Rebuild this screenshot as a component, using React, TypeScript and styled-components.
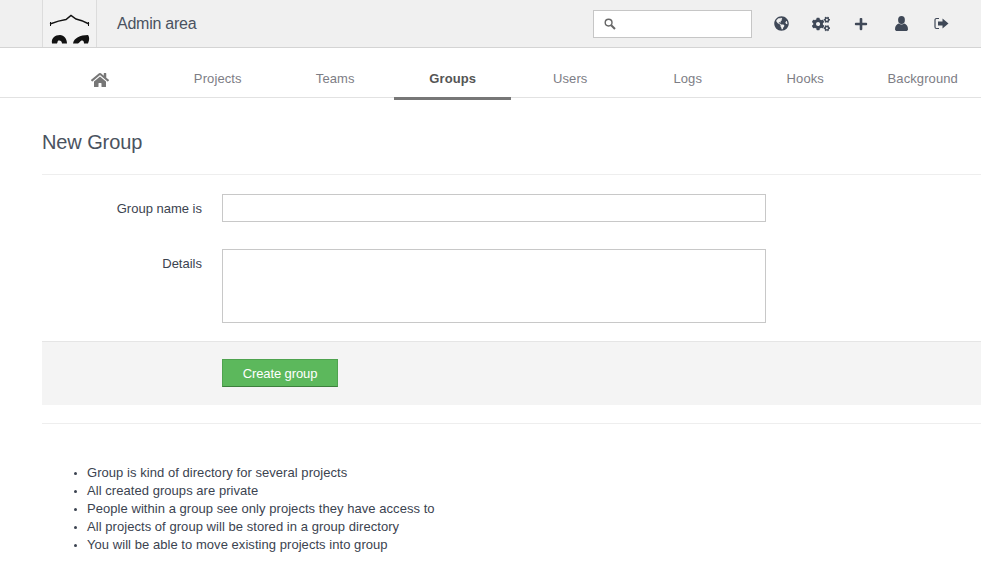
import styled, { createGlobalStyle } from "styled-components";
import { FaCogs, FaGlobeAmericas, FaHome, FaPlus } from "react-icons/fa";

const GlobalStyle = createGlobalStyle`
  html, body {
    margin: 0;
    padding: 0;
    background: #fff;
    overflow: hidden;
  }
  body {
    font-family: "Liberation Sans", Arial, sans-serif;
    font-size: 13px;
    color: #333c48;
  }
`;

const Page = styled.div`
  width: 981px;
  height: 565px;
  overflow: hidden;
`;

const Header = styled.header`
  height: 47px;
  background: #f0f0f0;
  border-bottom: 1px solid #d4d4d4;
  display: flex;
  align-items: center;
  padding-left: 42px;
`;

const LogoBox = styled.div`
  width: 53px;
  height: 47px;
  border-left: 1px solid #dcdcdc;
  border-right: 1px solid #dcdcdc;
  background: #f2f2f2;
  overflow: hidden;
`;

const Title = styled.h1`
  margin: 0 0 0 20px;
  font-size: 16px;
  font-weight: 400;
  letter-spacing: -0.25px;
  color: #4a5260;
  flex: 1;
`;

const SearchBox = styled.div`
  width: 147px;
  height: 26px;
  background: #fff;
  border: 1px solid #c6c6c6;
  display: flex;
  align-items: center;
  padding-left: 10px;
  margin-right: 9px;
  color: #666;
`;

const IconLink = styled.a<{ $size?: number }>`
  width: 40px;
  display: flex;
  justify-content: center;
  align-items: center;
  color: #3f4857;
  font-size: ${({ $size }) => $size ?? 15}px;
`;

const IconRow = styled.div`
  display: flex;
  padding-right: 20px;
`;

const Nav = styled.nav`
  height: 49px;
  border-bottom: 1px solid #e2e2e2;
  display: flex;
  padding-left: 41px;
`;

const Tab = styled.a<{ $active?: boolean }>`
  width: 118px;
  height: 52px;
  box-sizing: border-box;
  display: flex;
  justify-content: center;
  align-items: center;
  padding: 11px 0 0 1px;
  font-size: 13px;
  letter-spacing: 0.1px;
  font-weight: ${({ $active }) => ($active ? 700 : 400)};
  color: ${({ $active }) => ($active ? "#555" : "#7d7d85")};
  border-bottom: 3px solid ${({ $active }) => ($active ? "#777" : "transparent")};
`;

const HomeIcon = styled(FaHome)`
  font-size: 18px;
  margin-top: 4px;
  color: #777;
`;

const Main = styled.main`
  padding-left: 42px;
`;

const PageTitle = styled.h3`
  margin: 0;
  padding: 32px 0 20px;
  height: 77px;
  box-sizing: border-box;
  line-height: 24px;
  font-size: 20px;
  font-weight: 400;
  letter-spacing: -0.1px;
  color: #4a5260;
  border-bottom: 1px solid #eee;
`;

const Field = styled.div`
  display: flex;
  align-items: flex-start;
  margin-top: 19px;
  & + & {
    margin-top: 27px;
  }
`;

const Label = styled.label`
  width: 160px;
  height: 28px;
  text-align: right;
  line-height: 29px;
  color: #3b4350;
`;

const TextInput = styled.input`
  width: 544px;
  height: 28px;
  box-sizing: border-box;
  margin-left: 20px;
  padding: 4px 8px;
  background: #fff;
  border: 1px solid #c8c8c8;
  border-radius: 0;
`;

const TextArea = styled.textarea`
  display: block;
  width: 544px;
  height: 74px;
  box-sizing: border-box;
  margin-left: 20px;
  padding: 4px 8px;
  background: #fff;
  border: 1px solid #c8c8c8;
  border-radius: 0;
  resize: none;
`;

const Actions = styled.div`
  margin-top: 18px;
  height: 64px;
  box-sizing: border-box;
  background: #f4f4f4;
  border-top: 1px solid #e5e5e5;
  padding: 17px 0 0 180px;
`;

const SubmitButton = styled.button`
  width: 116px;
  height: 28px;
  box-sizing: border-box;
  padding: 0;
  font-family: inherit;
  font-size: 13px;
  letter-spacing: -0.1px;
  color: #fff;
  background: #5cb85c;
  border: 1px solid #4fa34f;
  border-bottom-color: #3c7f3c;
`;

const Divider = styled.hr`
  margin: 18px 0 0;
  border: 0;
  border-top: 1px solid #eee;
`;

const Notes = styled.ul`
  margin: 40px 0 0;
  padding: 0 0 0 45px;
  line-height: 18px;
  font-size: 13px;
  letter-spacing: 0.05px;
  color: #3b4350;
  li::marker {
    font-size: 10px;
  }
`;

const tabs = ["Projects", "Teams", "Groups", "Users", "Logs", "Hooks", "Background"];

const notes = [
  "Group is kind of directory for several projects",
  "All created groups are private",
  "People within a group see only projects they have access to",
  "All projects of group will be stored in a group directory",
  "You will be able to move existing projects into group",
];

function Logo() {
  return (
    <svg width="53" height="47" viewBox="0 0 53 47">
      <path d="M7 24Q16 20.500 23 19.500L28 15.500L33 19Q40 20.500 46 24" fill="none" stroke="#111" strokeWidth="1.500" />
      <path d="M7.500 22v4M45.500 22v4" stroke="#111" strokeWidth="1" />
      <path d="M9 43.500C8 38 12 35 17 35C21 35 24 39 24 43.500H19C19 41 17 40 15.500 40.500C14 41 15 43.500 13.500 43.500z" fill="#111" />
      <path d="M30 43.500C31 38 37 35 45 35C47 38 46 41 45 43.500H41C41 41 40 40 38.500 40.500C37 41 36 43.500 35 43.500z" fill="#111" />
    </svg>
  );
}

function SearchGlyph() {
  return (
    <svg width="12" height="12" viewBox="0 0 12 12" fill="none" stroke="#666">
      <circle cx="4.600" cy="4.600" r="3.400" strokeWidth="1.400" />
      <path d="M7.200 7.200L11 11" strokeWidth="2" />
    </svg>
  );
}

function UserGlyph() {
  return (
    <svg width="13" height="15" viewBox="0 0 13 15" fill="currentColor">
      <ellipse cx="6.500" cy="4" rx="3.400" ry="4" />
      <path d="M0 13.200C0 10 1.600 8.400 3.800 7.600c1.600 1.200 3.800 1.200 5.400 0C11.400 8.400 13 10 13 13.200c0 1.200-1 1.800-2 1.800H2c-1 0-2-.6-2-1.800z" />
    </svg>
  );
}

function SignOutGlyph() {
  return (
    <svg width="15" height="13" viewBox="0 0 15 13">
      <path d="M5 1.500H2.500a1.500 1.500 0 0 0-1.500 1.500v7a1.500 1.500 0 0 0 1.500 1.500H5" fill="none" stroke="currentColor" strokeWidth="1.200" />
      <path d="M4 4.500h4.500V1.500L14.500 6.500l-6 5V8.500H4z" fill="currentColor" />
    </svg>
  );
}

export default function App() {
  return (
    <Page>
      <GlobalStyle />
      <Header>
        <LogoBox>
          <Logo />
        </LogoBox>
        <Title>Admin area</Title>
        <SearchBox>
          <SearchGlyph />
        </SearchBox>
        <IconRow>
          <IconLink><FaGlobeAmericas /></IconLink>
          <IconLink $size={18}><FaCogs /></IconLink>
          <IconLink $size={14}><FaPlus /></IconLink>
          <IconLink><UserGlyph /></IconLink>
          <IconLink><SignOutGlyph /></IconLink>
        </IconRow>
      </Header>
      <Nav>
        <Tab><HomeIcon /></Tab>
        {tabs.map((tab) => (
          <Tab key={tab} $active={tab === "Groups"}>{tab}</Tab>
        ))}
      </Nav>
      <Main>
        <PageTitle>New Group</PageTitle>
        <Field>
          <Label>Group name is</Label>
          <TextInput />
        </Field>
        <Field>
          <Label>Details</Label>
          <TextArea />
        </Field>
        <Actions>
          <SubmitButton>Create group</SubmitButton>
        </Actions>
        <Divider />
        <Notes>
          {notes.map((note) => (
            <li key={note}>{note}</li>
          ))}
        </Notes>
      </Main>
    </Page>
  );
}
